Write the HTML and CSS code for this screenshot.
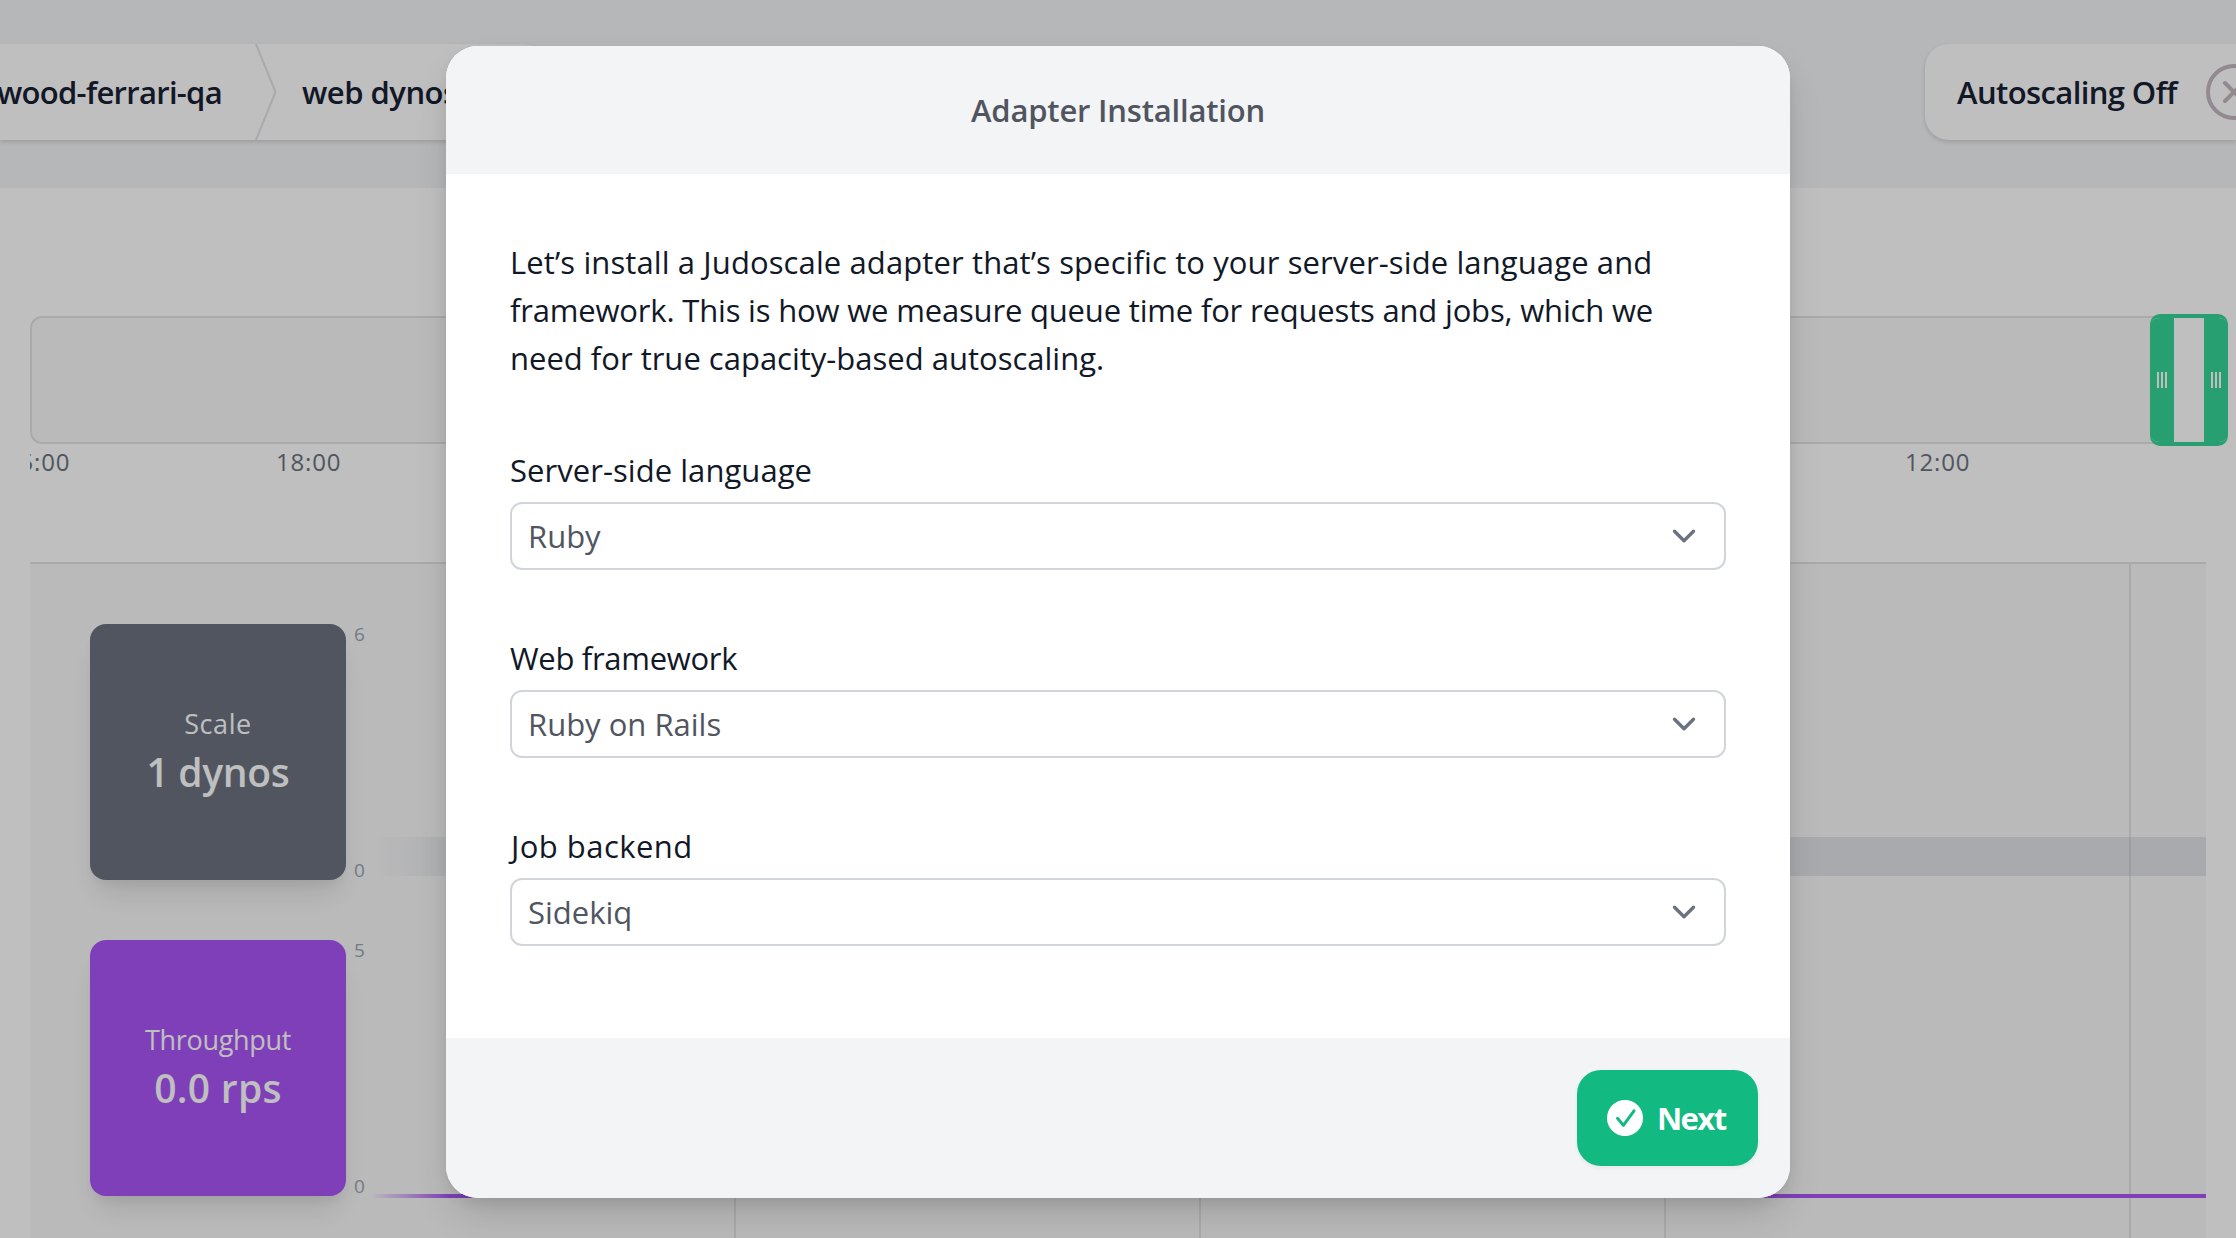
FILE: index.html
```html
<!DOCTYPE html>
<html lang="en">
<head>
<meta charset="utf-8">
<title>Adapter Installation</title>
<link rel="stylesheet" href="styles.css">
</head>
<body>
<div class="page">
  <header class="topbar">
    <nav class="crumbs">
      <span class="crumb crumb-app">wood-ferrari-qa</span>
      <svg class="crumb-sep" viewBox="0 0 22 96"><path d="M1 0 L20.5 48 L1 96" fill="none" stroke="#e1e3e6" stroke-width="2"/></svg>
      <span class="crumb crumb-process">web dynos</span>
    </nav>
    <div class="autoscale">
      <span class="autoscale-label">Autoscaling Off</span>
      <svg class="autoscale-icon" viewBox="0 0 56 56"><g fill="none" stroke="#c4b7c0" stroke-width="4" stroke-linecap="round"><circle cx="28" cy="28" r="26"/><path d="M19 19 L37 37 M37 19 L19 37"/></g></svg>
    </div>
  </header>

  <main class="content">
    <section class="timeline">
      <div class="timeline-track">
        <div class="brush">
          <span class="handle"><i></i><i></i><i></i></span>
          <span class="handle"><i></i><i></i><i></i></span>
        </div>
      </div>
      <div class="timeline-labels">
        <span class="time time-first">15:00</span>
        <span class="time time-evening">18:00</span>
        <span class="time time-noon">12:00</span>
      </div>
    </section>

    <section class="chart">
      <div class="gridlines"><i></i><i></i><i></i><i></i></div>
      <div class="lane">
        <div class="tile tile-scale">
          <span class="tile-name">Scale</span>
          <span class="tile-value tile-value-scale">1 dynos</span>
        </div>
        <div class="axis"><span>6</span><span>0</span></div>
        <div class="series series-scale"></div>
      </div>
      <div class="lane">
        <div class="tile tile-throughput">
          <span class="tile-name tile-name-tight">Throughput</span>
          <span class="tile-value">0.0 rps</span>
        </div>
        <div class="axis"><span>5</span><span>0</span></div>
        <div class="series series-throughput"></div>
      </div>
    </section>
  </main>
</div>

<div class="overlay">
  <div class="modal">
    <h1 class="modal-title">Adapter Installation</h1>
    <div class="modal-body">
      <p class="intro">
        <span class="intro-first">Let’s install a Judoscale adapter that’s specific to your server-side language and</span>
        <span class="intro-second">framework. This is how we measure queue time for requests and jobs, which we</span>
        <span>need for true capacity-based autoscaling.</span>
      </p>
      <div class="field">
        <span class="field-label label-language">Server-side language</span>
        <div class="select"><span>Ruby</span><svg class="chevron" viewBox="0 0 24 16"><path d="M2.5 3.2 L12 12.7 L21.5 3.2"/></svg></div>
      </div>
      <div class="field">
        <span class="field-label label-framework">Web framework</span>
        <div class="select"><span>Ruby on Rails</span><svg class="chevron" viewBox="0 0 24 16"><path d="M2.5 3.2 L12 12.7 L21.5 3.2"/></svg></div>
      </div>
      <div class="field">
        <span class="field-label label-backend">Job backend</span>
        <div class="select"><span>Sidekiq</span><svg class="chevron" viewBox="0 0 24 16"><path d="M2.5 3.2 L12 12.7 L21.5 3.2"/></svg></div>
      </div>
    </div>
    <div class="modal-footer">
      <button class="next" type="button">
        <svg class="check" viewBox="0 0 36 36"><circle cx="18" cy="18" r="18" fill="#fff"/><path d="M10.5 18.3 L16.4 25.3 L27 10.8" fill="none" stroke="#12b981" stroke-width="3" stroke-linecap="round" stroke-linejoin="round"/></svg>
        <span>Next</span>
      </button>
    </div>
  </div>
</div>
</body>
</html>
```
FILE: styles.css
```css
* { box-sizing: border-box; }

body {
  margin: 0;
  width: 2236px;
  height: 1238px;
  overflow: hidden;
  position: relative;
  background: #fff;
  color: #172033;
  font-family: "Open Sans", sans-serif;
  font-size: 31px;
}

.page { height: 1238px; overflow: hidden; }

/* Top bar */
.topbar {
  height: 188px;
  padding-top: 44px;
  background: #f3f4f6;
  display: flex;
  justify-content: space-between;
  overflow: hidden;
  font-weight: 600;
  line-height: 96px;
  white-space: nowrap;
}
.crumbs {
  width: 548px;
  height: 96px;
  display: flex;
  background: #fff;
  border-radius: 0 24px 24px 0;
  box-shadow: 0 2px 4px rgba(0, 0, 0, .14);
}
.crumb-app {
  width: 222px;
  display: flex;
  justify-content: flex-end;
  letter-spacing: -.7px;
}
.crumb-sep { width: 22px; height: 96px; margin-left: 33px; }
.crumb-process { margin-left: 25px; letter-spacing: -.5px; }
.autoscale {
  width: 311px;
  height: 96px;
  flex: none;
  display: flex;
  align-items: center;
  padding-left: 32px;
  background: #fff;
  border-radius: 24px 0 0 24px;
  box-shadow: 0 2px 4px rgba(0, 0, 0, .14);
}
.autoscale-label { width: 249px; flex: none; letter-spacing: -.6px; }
.autoscale-icon { width: 56px; height: 56px; flex: none; }

/* Timeline */
.content { padding: 128px 30px 0; }
.timeline { height: 246px; }
.timeline-track {
  height: 128px;
  margin-right: 1px;
  border: 2px solid #e1e3e6;
  border-radius: 12px;
  background: #f9f9fa;
  position: relative;
}
.brush {
  position: absolute;
  top: -4px;
  right: -25px;
  width: 78px;
  height: 132px;
  border-top: 4px solid #34d597;
  border-bottom: 4px solid #34d597;
  border-radius: 10px;
  background: #fff;
  display: flex;
  justify-content: space-between;
  overflow: hidden;
}
.handle {
  width: 24px;
  background: #34d597;
  display: flex;
  gap: 2px;
  align-items: center;
  justify-content: center;
}
.handle i { width: 2px; height: 16px; background: #fff; }
.timeline-labels {
  display: flex;
  height: 36px;
  overflow: hidden;
  font-size: 24px;
  line-height: 36px;
  letter-spacing: .8px;
  color: #6b7280;
}
.time { width: 66px; flex: none; }
.time-first { margin-left: -25px; }
.time-evening { margin-left: 205px; }
.time-noon { margin-left: 1563px; }

/* Chart */
.chart {
  position: relative;
  height: 700px;
  padding: 60px 0 0 60px;
  border-top: 2px solid #e1e3e6;
  background: #f9f9fa;
  display: flex;
  flex-direction: column;
  gap: 60px;
}
.gridlines {
  position: absolute;
  inset: 0 0 0 704px;
  display: flex;
  gap: 463px;
}
.gridlines i { width: 2px; flex: none; background: #e1e3e6; }
.lane { height: 256px; flex: none; display: flex; position: relative; }
.tile {
  width: 256px;
  border-radius: 16px;
  padding-bottom: 4px;
  display: flex;
  flex-direction: column;
  align-items: center;
  justify-content: center;
  gap: 4px;
  color: #fff;
  box-shadow: 0 20px 30px -6px rgba(0, 0, 0, .1), 0 8px 12px -4px rgba(0, 0, 0, .06);
}
.tile-scale { background: #6b7280; }
.tile-throughput { background: #a855f7; }
.tile-name { font-size: 27px; line-height: 40px; letter-spacing: .6px; }
.tile-name-tight { letter-spacing: -.3px; }
.tile-value { font-size: 39px; line-height: 48px; font-weight: 600; letter-spacing: .3px; }
.tile-value-scale { letter-spacing: -.3px; }
.axis {
  width: 24px;
  padding: 0 0 0 8px;
  display: flex;
  flex-direction: column;
  justify-content: space-between;
  font-size: 19px;
  line-height: 20px;
  color: #9ca3af;
}
.series {
  align-self: flex-end;
  flex: 1;
}
.series-scale {
  height: 39px;
  margin-bottom: 4px;
  background: linear-gradient(to right, rgba(156, 163, 175, 0), rgba(156, 163, 175, .26) 120px);
}
.series-throughput {
  height: 4px;
  margin-bottom: -2px;
  background: linear-gradient(to right, rgba(168, 85, 247, 0), #a855f7 80px);
}

/* Modal */
.overlay {
  position: absolute;
  inset: 0;
  z-index: 10;
  padding-top: 46px;
  background: rgba(0, 0, 0, .25);
  display: flex;
  justify-content: center;
  align-items: flex-start;
}
.modal {
  width: 1344px;
  height: 1152px;
  display: flex;
  flex-direction: column;
  background: #fff;
  color: #111827;
  border-radius: 32px;
  overflow: hidden;
  box-shadow: 0 20px 40px -8px rgba(0, 0, 0, .16), 0 6px 16px -4px rgba(0, 0, 0, .1);
}
.modal-title {
  margin: 0;
  height: 128px;
  background: #f3f4f6;
  color: #50555f;
  font-size: 31px;
  font-weight: 600;
  line-height: 128px;
  text-align: center;
  letter-spacing: -.2px;
}
.modal-body {
  flex: 1;
  padding: 64px 64px 0;
  display: flex;
  flex-direction: column;
  gap: 64px;
  line-height: 48px;
}
.intro { margin: 0; white-space: nowrap; }
.intro span { display: block; }
.intro .intro-first { letter-spacing: .11px; }
.intro .intro-second { letter-spacing: -.18px; }
.field { display: flex; flex-direction: column; gap: 8px; }
.label-language { letter-spacing: .05px; }
.label-framework { letter-spacing: -.3px; }
.label-backend { padding-left: 1px; letter-spacing: .45px; }
.select {
  height: 68px;
  padding: 0 28px 0 16px;
  border: 2px solid #d1d5db;
  border-radius: 12px;
  display: flex;
  align-items: center;
  justify-content: space-between;
  color: #50555f;
  line-height: 64px;
}
.chevron {
  width: 24px;
  height: 16px;
  fill: none;
  stroke: #6b7280;
  stroke-width: 3.4;
  stroke-linecap: round;
  stroke-linejoin: round;
}
.modal-footer {
  height: 160px;
  padding: 32px;
  background: #f3f4f6;
  display: flex;
  justify-content: flex-end;
}
.next {
  width: 181px;
  height: 96px;
  padding: 0 0 0 30px;
  border: 0;
  border-radius: 24px;
  display: flex;
  align-items: center;
  gap: 14px;
  background: #12b981;
  color: #fff;
  font: 700 31px/96px "Open Sans", sans-serif;
  letter-spacing: -1.6px;
  box-shadow: 0 2px 4px rgba(0, 0, 0, .06);
}
.check { width: 36px; height: 36px; flex: none; }
```
